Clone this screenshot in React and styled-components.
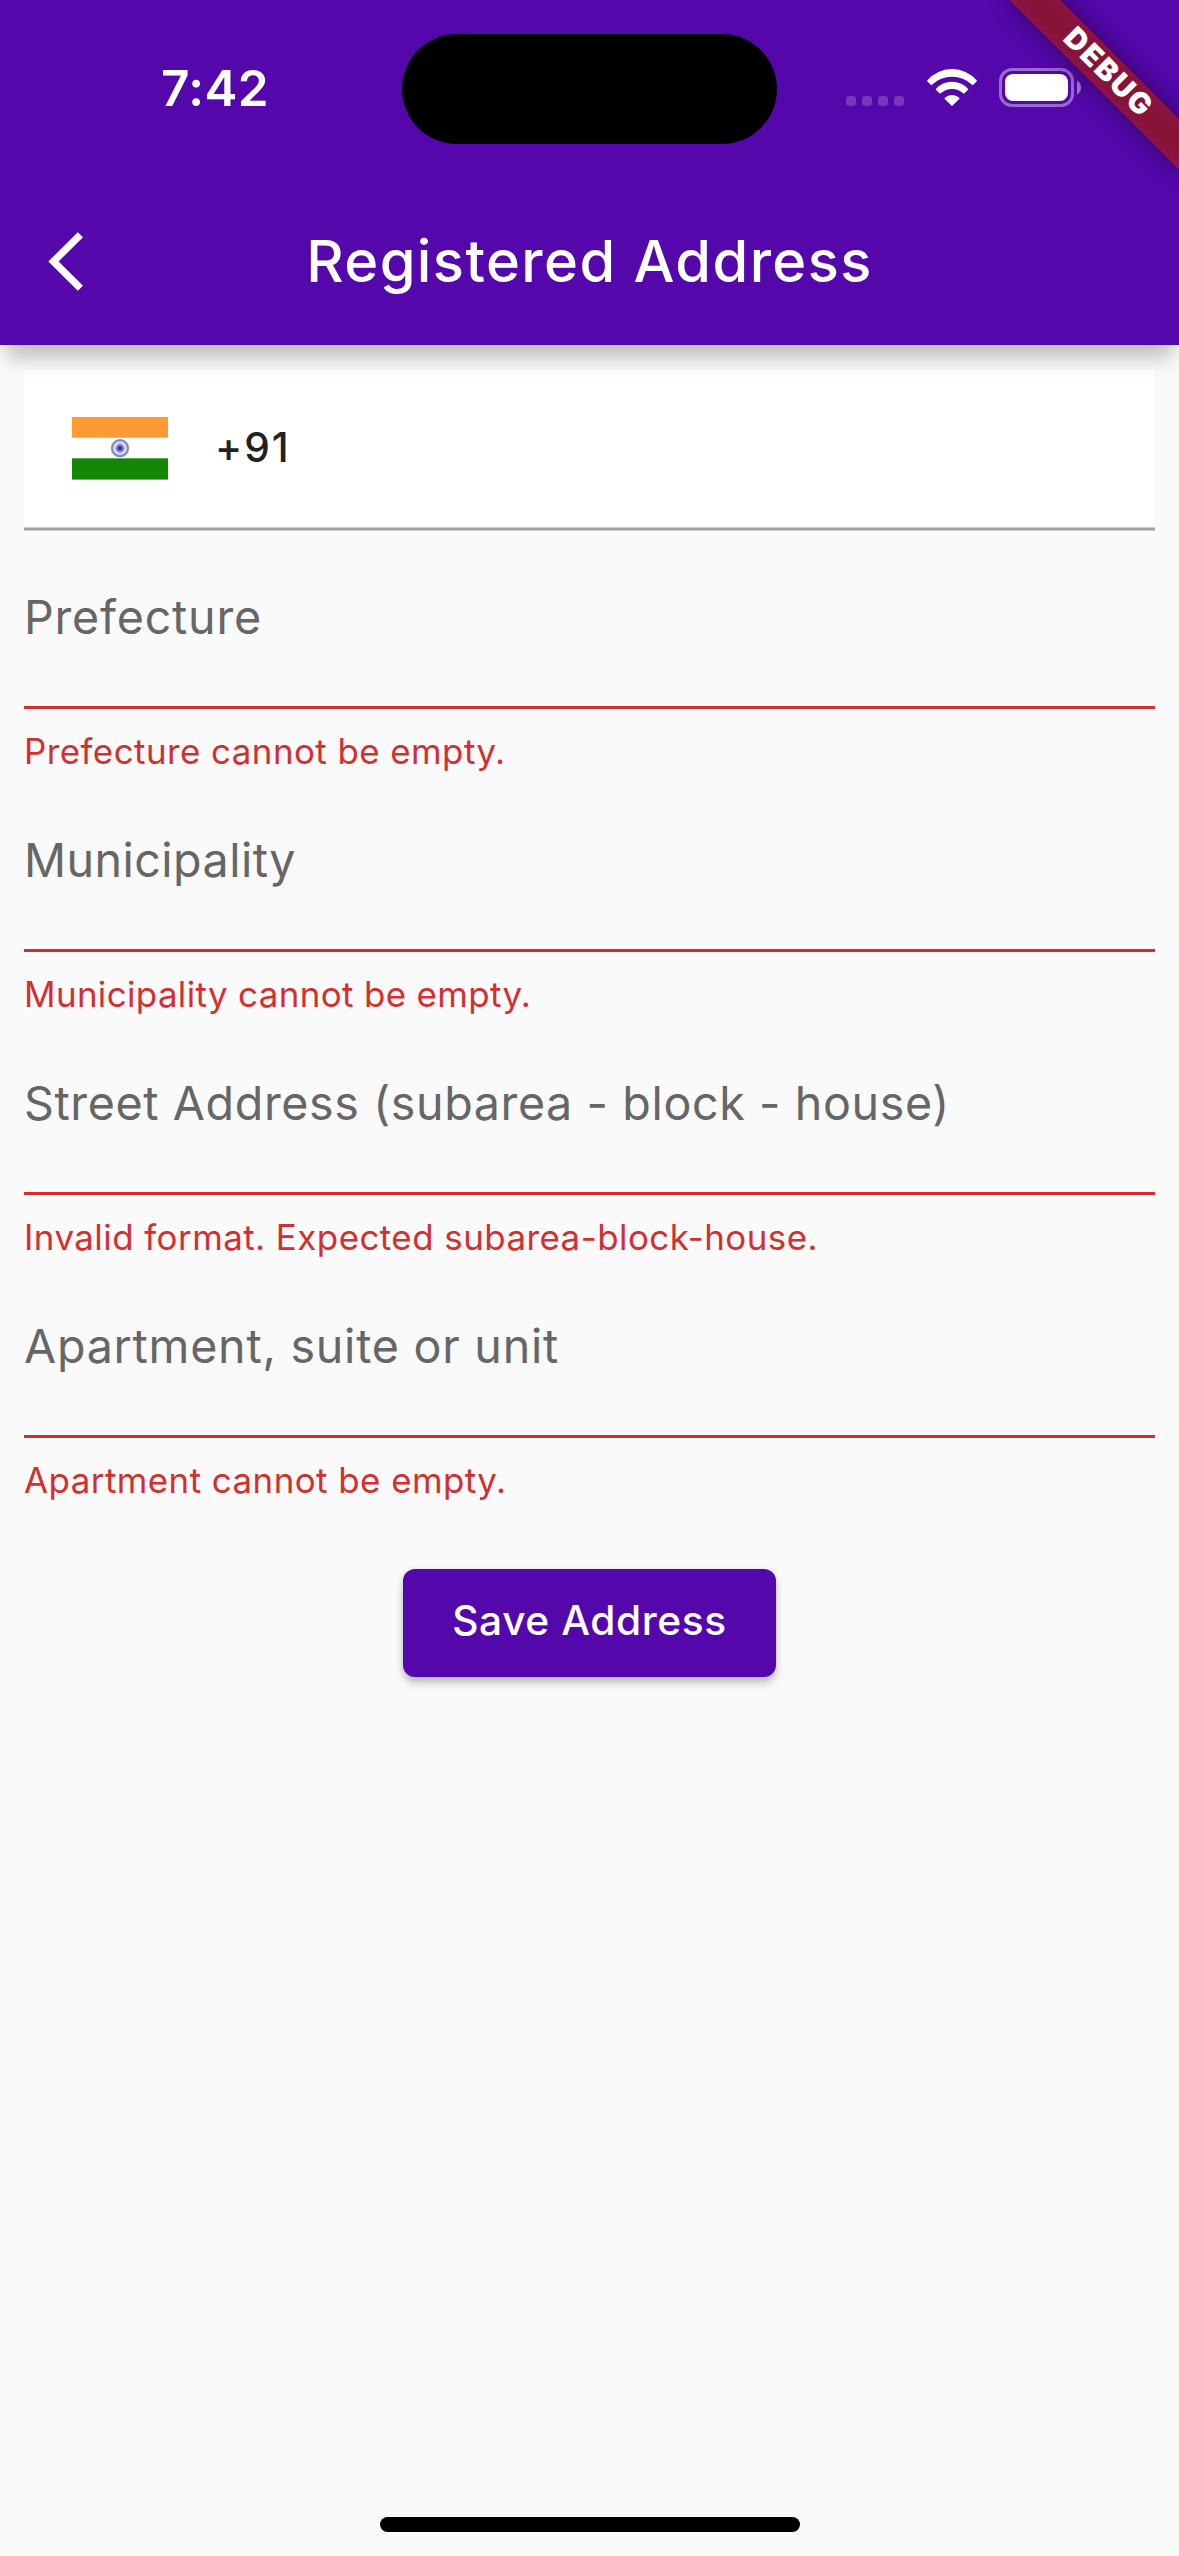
import React from "react";
import styled, { createGlobalStyle } from "styled-components";

const purple = "#5407ab";
const danger = "#d32f2f";

const GlobalStyle = createGlobalStyle`
  * { box-sizing: border-box; }
  body { margin: 0; background: #fafafa; }
`;

const Screen = styled.div`
  position: relative;
  display: flex;
  flex-direction: column;
  width: 1179px;
  height: 2556px;
  overflow: hidden;
  background: #fafafa;
  font-family: Inter, Roboto, "Liberation Sans", sans-serif;
`;

const Header = styled.header`
  position: relative;
  z-index: 1;
  flex: none;
  height: 345px;
  background: ${purple};
  color: #fff;
  box-shadow: 0 18px 20px -6px rgba(0, 0, 0, 0.25);
`;

const StatusBar = styled.div`
  display: grid;
  grid-template-columns: 401.5px 375.5px 402px;
  align-items: center;
  height: 177px;
`;

const Clock = styled.time`
  padding: 0 0 1px 161px;
  font-size: 49.5px;
  line-height: 60px;
  font-weight: 600;
  letter-spacing: 0.4px;
`;

const Island = styled.div`
  height: 110px;
  margin-top: 1px;
  border-radius: 55px;
  background: #000;
`;

const Indicators = styled.div`
  display: flex;
  align-items: center;
  padding-left: 69px;
  padding-bottom: 2px;
`;

const SignalDots = styled.div`
  display: flex;
  gap: 6px;
  padding-top: 27px;
  margin-right: 22.7px;
`;

const SignalDot = styled.i`
  width: 10px;
  height: 10px;
  border-radius: 3px;
  background: rgba(255, 255, 255, 0.2);
`;

const WifiIcon = styled.svg`
  display: block;
  width: 50px;
  height: 37px;
  margin-right: 22.3px;
`;

const Battery = styled.div`
  width: 75px;
  height: 39px;
  padding: 3px;
  border: 3px solid rgba(255, 255, 255, 0.4);
  border-radius: 13px;
`;

const BatteryLevel = styled.div`
  height: 100%;
  border-radius: 8px;
  background: #fff;
`;

const BatteryCap = styled.i`
  width: 4px;
  height: 13px;
  margin-left: 3px;
  border-radius: 0 4px 4px 0 / 0 6.5px 6.5px 0;
  background: rgba(255, 255, 255, 0.45);
`;

const AppBar = styled.div`
  display: grid;
  grid-template-columns: 1fr auto 1fr;
  align-items: center;
  height: 168px;
`;

const BackButton = styled.button`
  display: flex;
  justify-self: start;
  margin: 0 0 0 48px;
  padding: 0;
  border: 0;
  background: none;
  color: inherit;

  svg {
    display: block;
    width: 35px;
    height: 59px;
  }
`;

const Title = styled.h1`
  margin: 0;
  font-size: 57.8px;
  line-height: 72px;
  font-weight: 500;
  letter-spacing: 1.43px;
  white-space: nowrap;
`;

/* The corner ribbon hangs over the header, turned about the top right corner. */
const Ribbon = styled.div`
  position: absolute;
  z-index: 2;
  top: 84px;
  left: 1059px;
  width: 240px;
  height: 36px;
  transform: rotate(45deg);
  transform-origin: 120px -84px;

  &::before {
    content: "";
    position: absolute;
    inset: 0;
    background: rgba(0, 0, 0, 0.46);
    filter: blur(12.5px);
  }
`;

const RibbonLabel = styled.span`
  position: relative;
  display: block;
  padding: 0 0 3px 3px;
  background: rgba(183, 28, 28, 0.63);
  color: #fff;
  font-size: 29.5px;
  line-height: 33px;
  font-weight: 900;
  letter-spacing: 2px;
  text-align: center;
`;

const Form = styled.form`
  display: flex;
  flex-direction: column;
  padding: 24px 24px 0;
`;

const PhoneField = styled.div`
  display: flex;
  align-items: center;
  height: 158px;
  padding-left: 48px;
  background: #fff;
`;

const PhoneUnderline = styled.div`
  height: 4px;
  background: #9e9e9e;
  border-top: 1px solid #cfcfcf;
  border-bottom: 1px solid #cfcfcf;
`;

const Flag = styled.svg`
  display: block;
  width: 96px;
  height: 63px;
  margin-top: 1px;
`;

const DialCode = styled.span`
  margin-left: 47px;
  font-size: 40.7px;
  line-height: 50px;
  font-weight: 500;
  letter-spacing: 2px;
  color: #212121;
`;

const Field = styled.div`
  display: flex;
  flex-direction: column;
  padding-top: 58px;
`;

const FieldLabel = styled.label`
  height: 117px;
  border: 0;
  font-size: 46.6px;
  line-height: 56px;
  letter-spacing: ${(p) => p.$tracking}px;
  color: #666;
  white-space: nowrap;
`;

const FieldError = styled.p`
  margin: 0;
  padding-top: 20px;
  border-top: 3px solid ${danger};
  font-size: 34.9px;
  line-height: 45px;
  letter-spacing: ${(p) => p.$tracking}px;
  color: ${danger};
  white-space: nowrap;
`;

const SaveButton = styled.button`
  align-self: center;
  width: 372.4px;
  height: 108px;
  margin: 65.5px 0 0;
  padding: 0 0 2.4px;
  border: 0;
  border-radius: 12px;
  background: ${purple};
  color: #fff;
  font-family: inherit;
  font-size: 40.7px;
  line-height: 50px;
  font-weight: 500;
  letter-spacing: 0.57px;
  box-shadow: 0 7px 10px -1px rgba(0, 0, 0, 0.22), 0 1px 7px rgba(0, 0, 0, 0.12);
`;

const HomeIndicator = styled.div`
  align-self: center;
  width: 420px;
  height: 15px;
  margin-top: auto;
  margin-bottom: 24px;
  border-radius: 7.5px;
  background: #000;
`;

const fields = [
  {
    label: "Prefecture",
    labelTracking: 0.78,
    error: "Prefecture cannot be empty.",
    errorTracking: 0.45,
  },
  {
    label: "Municipality",
    labelTracking: 0.46,
    error: "Municipality cannot be empty.",
    errorTracking: 0.37,
  },
  {
    label: "Street Address (subarea - block - house)",
    labelTracking: 0.61,
    error: "Invalid format. Expected subarea-block-house.",
    errorTracking: 0.46,
  },
  {
    label: "Apartment, suite or unit",
    labelTracking: 0.76,
    error: "Apartment cannot be empty.",
    errorTracking: 0.46,
  },
];

function IndiaFlag() {
  return (
    <Flag viewBox="0 0 96 63" role="img" aria-label="India">
      <rect width="96" height="63" fill="#fff" />
      <rect width="96" height="20.7" fill="#ff9933" />
      <rect y="41.3" width="96" height="21.3" fill="#128807" />
      <circle cx="48" cy="31.2" r="8" fill="#dcdcf0" stroke="#8585c8" strokeWidth="2.2" />
      <circle cx="48" cy="31.2" r="4.6" fill="#9a9ad2" />
      <circle cx="48" cy="31.2" r="2.6" fill="#3a3aa6" />
    </Flag>
  );
}

function Wifi() {
  return (
    <WifiIcon viewBox="0 0 50 37" fill="#fff" aria-hidden="true">
      <path d="M0.4 11.2A32.6 32.6 0 0 1 49.6 11.2Q50.2 11.8 49.6 12.4L46.2 15.7Q45.6 16.2 45 15.7A29 29 0 0 0 5 15.7Q4.4 16.2 3.8 15.7L0.4 12.4Q-0.2 11.8 0.4 11.2Z" />
      <path d="M9.1 19.7A21.8 21.8 0 0 1 40.9 19.7Q41.5 20.3 40.9 20.9L37.4 24.3Q36.8 24.9 36.2 24.3A16.6 16.6 0 0 0 13.8 24.3Q13.2 24.9 12.6 24.3L9.1 20.9Q8.5 20.3 9.1 19.7Z" />
      <path d="M17.8 28.8A10.6 10.6 0 0 1 32.2 28.8Q32.8 29.4 32.2 30L25.6 36.6Q25 37.2 24.4 36.6L17.8 30Q17.2 29.4 17.8 28.8Z" />
    </WifiIcon>
  );
}

export default function App() {
  return (
    <Screen>
      <GlobalStyle />
      <Header>
        <StatusBar>
          <Clock>7:42</Clock>
          <Island />
          <Indicators>
            <SignalDots>
              <SignalDot />
              <SignalDot />
              <SignalDot />
              <SignalDot />
            </SignalDots>
            <Wifi />
            <Battery>
              <BatteryLevel />
            </Battery>
            <BatteryCap />
          </Indicators>
        </StatusBar>
        <AppBar>
          <BackButton type="button" aria-label="Back">
            <svg viewBox="0 0 35 59" fill="currentColor" aria-hidden="true">
              <path d="M29.8 0.2L35 5.2L10.6 29.5L35 53.8L29.8 58.8L0.4 29.5Z" />
            </svg>
          </BackButton>
          <Title>Registered Address</Title>
        </AppBar>
      </Header>
      <Ribbon>
        <RibbonLabel>DEBUG</RibbonLabel>
      </Ribbon>
      <Form>
        <PhoneField>
          <IndiaFlag />
          <DialCode>+91</DialCode>
        </PhoneField>
        <PhoneUnderline />
        {fields.map((field) => (
          <Field key={field.label}>
            <FieldLabel $tracking={field.labelTracking}>{field.label}</FieldLabel>
            <FieldError $tracking={field.errorTracking}>{field.error}</FieldError>
          </Field>
        ))}
        <SaveButton type="button">Save Address</SaveButton>
      </Form>
      <HomeIndicator />
    </Screen>
  );
}
